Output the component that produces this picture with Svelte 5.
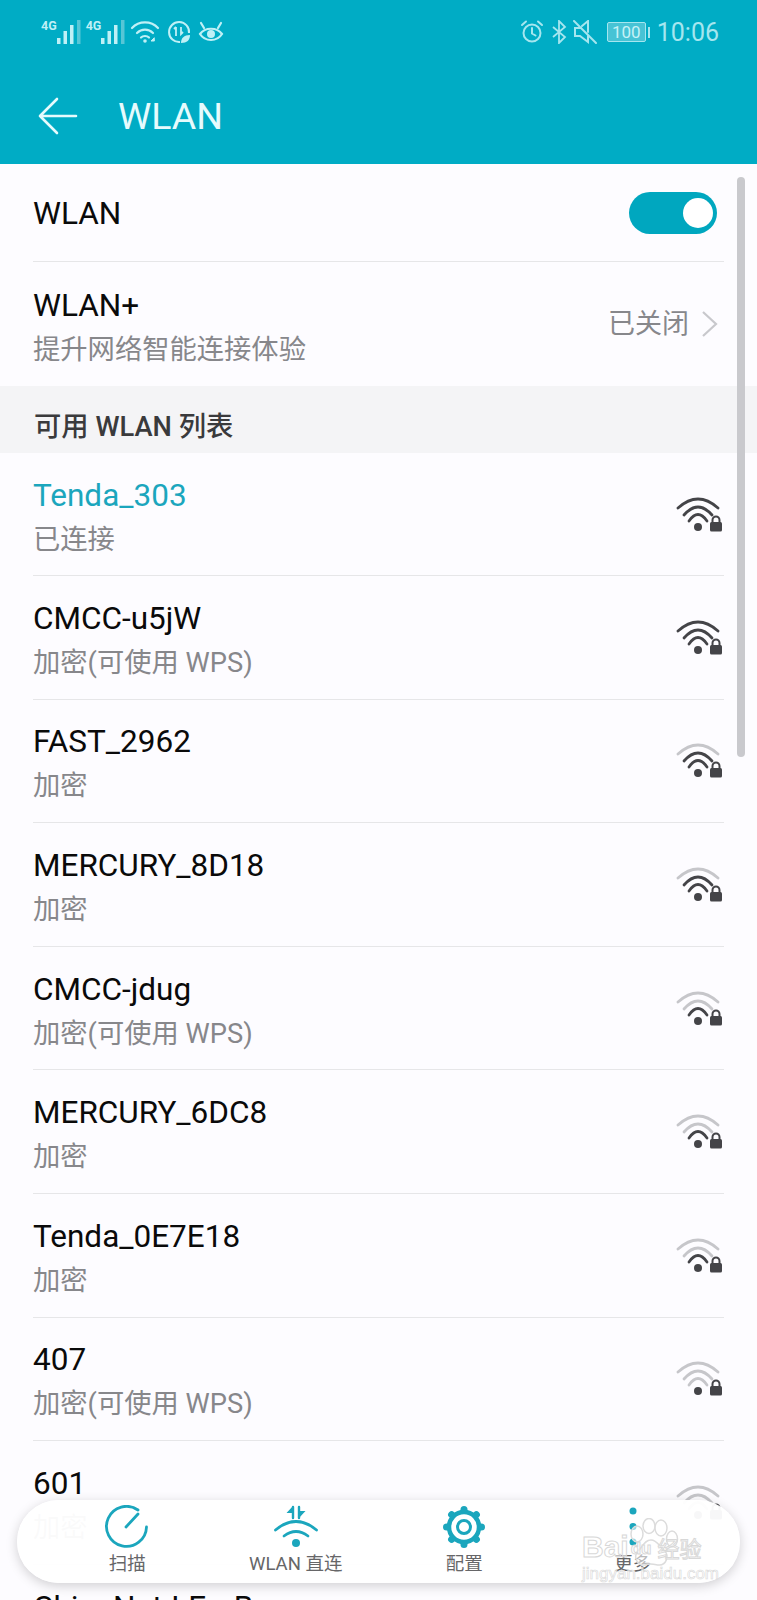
<script lang="ts">
	// level = how many arcs are dark, 3 is full signal
	const networks = [
		{ name: 'Tenda_303', sub: '已连接', level: 3, active: true },
		{ name: 'CMCC-u5jW', sub: '加密(可使用 WPS)', level: 3 },
		{ name: 'FAST_2962', sub: '加密', level: 2 },
		{ name: 'MERCURY_8D18', sub: '加密', level: 2 },
		{ name: 'CMCC-jdug', sub: '加密(可使用 WPS)', level: 1 },
		{ name: 'MERCURY_6DC8', sub: '加密', level: 1 },
		{ name: 'Tenda_0E7E18', sub: '加密', level: 1 },
		{ name: '407', sub: '加密(可使用 WPS)', level: 0 },
		{ name: '601', sub: '加密', level: 0 },
		{ name: 'ChinaNet-LEmB', sub: '加密', level: 0 }
	];
	const dark = '#444448';
	const light = '#c6c6ca';
</script>

<main class="page">
	<header class="top">
		<div class="status">
			<div class="status-left">
				{#each [0, 1] as s}
					<div class="sim">
						<span class="g4">4G</span>
						<svg width="24" height="26" viewBox="0 0 24 26">
							<rect x="0" y="19" width="3.5" height="6" fill="#bff0f6" />
							<rect x="6.5" y="12" width="3.5" height="13" fill="#bff0f6" />
							<rect x="13" y="6" width="3.5" height="19" fill="#bff0f6" />
							<rect x="20" y="1" width="3.5" height="24" fill="#57c6d6" />
						</svg>
					</div>
				{/each}
				<svg width="30" height="26" viewBox="0 0 30 26" fill="none" stroke="#bff0f6" stroke-width="2.2" stroke-linecap="round">
					<path d="M2 9c7-7.5 19-7.5 26 0" />
					<path d="M7 14c4.5-4.5 11.5-4.5 16 0" />
					<path d="M11 18.5c2-2 6-2 8 0" />
					<circle cx="15" cy="22" r="1.8" fill="#bff0f6" stroke="none" />
					<path d="M24 19l-3 3h3z" fill="#bff0f6" stroke-width="1" />
				</svg>
				<svg width="24" height="24" viewBox="0 0 24 24" fill="none" stroke="#bff0f6" stroke-width="2">
					<path d="M13 22a10 10 0 1 1 9-9" />
					<path d="M9 7v9M7 9L9 7M14 7v7l2-2" stroke-width="1.8" />
					<path d="M14 23c0-5 3-8 9-8 0 5-3 8-9 8z" fill="#bff0f6" stroke="none" />
				</svg>
				<svg width="26" height="24" viewBox="0 0 26 24" fill="none" stroke="#bff0f6" stroke-width="2.2" stroke-linecap="round">
					<path d="M2 14c5-7 17-7 22 0-5 8-17 8-22 0z" />
					<circle cx="13" cy="14" r="4" fill="#bff0f6" stroke="none" />
					<path d="M3 3l3 5M23 3l-3 5" />
				</svg>
			</div>
			<div class="status-right">
				<svg width="24" height="24" viewBox="0 0 24 24" fill="none" stroke="#a5e6ef" stroke-width="2" stroke-linecap="round">
					<circle cx="12" cy="13" r="8.5" />
					<path d="M12 8v5.5l3.5 2M2 5l4-3.5M22 5l-4-3.5" />
				</svg>
				<svg class="bt" width="16" height="24" viewBox="0 0 16 24" fill="none" stroke="#a5e6ef" stroke-width="1.8">
					<path d="M2 7l12 10-6 6V1l6 6L2 17" />
				</svg>
				<svg width="24" height="24" viewBox="0 0 24 24" fill="none" stroke="#a5e6ef" stroke-width="2" stroke-linecap="round">
					<path d="M8 8H2v8h5l8 6v-6M9 6l6-5v11" />
					<path d="M1 1l22 22" />
				</svg>
				<div class="battery">
					<span class="cell">100</span>
					<span class="nub"></span>
				</div>
				<span class="clock">10:06</span>
			</div>
		</div>
		<div class="title-bar">
			<svg class="back" width="40" height="40" viewBox="0 0 40 40" fill="none" stroke="#e6fbfd" stroke-width="2.6" stroke-linecap="round" stroke-linejoin="round">
				<path d="M2 20h36M19 3L2 20l17 17" />
			</svg>
			<h1>WLAN</h1>
		</div>
	</header>

	<section class="settings">
		<div class="row-plain">
			<span class="name">WLAN</span>
			<span class="toggle"><span class="knob"></span></span>
		</div>
		<div class="row-plus">
			<div class="text">
				<div class="name">WLAN+</div>
				<div class="sub">提升网络智能连接体验</div>
			</div>
			<div class="closed">
				<span>已关闭</span>
				<svg width="18" height="28" viewBox="0 0 18 28" fill="none" stroke="#c8c8cc" stroke-width="2.2">
					<path d="M3 2l13 12L3 26" />
				</svg>
			</div>
		</div>
	</section>

	<div class="section-head">可用 WLAN 列表</div>

	<section class="list">
		{#each networks as n}
			<div class="net">
				<div class="text">
					<div class="name" class:active={n.active}>{n.name}</div>
					<div class="sub">{n.sub}</div>
				</div>
				<svg class="wifi" width="46" height="35" viewBox="0 0 46 35" fill="none" stroke-width="2.8" stroke-linecap="round">
					<path d="M2 11Q22 -7 42 11" stroke={n.level >= 3 ? dark : light} />
					<path d="M8 18Q22 2 36 18" stroke={n.level >= 2 ? dark : light} />
					<path d="M13 24Q22 11 31 24" stroke={n.level >= 1 ? dark : light} />
					<circle cx="22" cy="30" r="4" fill={dark} />
					<path d="M36.5 26v-3a3.5 3.5 0 0 1 7 0v3" stroke={dark} stroke-width="2" />
					<rect x="34" y="25" width="12" height="9.5" rx="1.5" fill={dark} />
				</svg>
			</div>
		{/each}
	</section>

	<div class="scrollbar"></div>

	<nav class="bottom">
		<div class="tab">
			<svg width="44" height="44" viewBox="0 0 44 44" fill="none" stroke="#1ba6bd" stroke-width="2.8" stroke-linecap="round">
				<path d="M33 5A20 20 0 1 0 41.5 22" />
				<path d="M21 22L33 9" />
			</svg>
			<span>扫描</span>
		</div>
		<div class="tab">
			<svg width="44" height="44" viewBox="0 0 44 44" fill="none" stroke="#1ba6bd" stroke-width="2.8" stroke-linecap="round">
				<path d="M1.5 25Q22 8 42.5 25" />
				<path d="M10 31Q22 22 34 31" />
				<circle cx="22" cy="38" r="4" fill="#1ba6bd" stroke="none" />
				<path d="M19 2V13M25 2V13" stroke-width="2.4" />
				<path d="M19 1L12.5 8H19zM25 13L31.5 6H25z" fill="#1ba6bd" stroke="none" />
			</svg>
			<span>WLAN 直连</span>
		</div>
		<div class="tab">
			<svg width="44" height="44" viewBox="0 0 44 44" fill="none" stroke="#1ba6bd">
				<circle cx="22" cy="22" r="15" stroke-width="4.5" />
				<circle cx="22" cy="22" r="6.5" stroke-width="3" />
				{#each [0, 45, 90, 135, 180, 225, 270, 315] as a}
					<circle cx="22" cy="4.5" r="3.5" fill="#1ba6bd" stroke="none" transform="rotate({a} 22 22)" />
				{/each}
			</svg>
			<span>配置</span>
		</div>
		<div class="tab">
			<svg width="44" height="44" viewBox="0 0 44 44" fill="#1ba6bd">
				<circle cx="22" cy="6" r="3.5" />
				<circle cx="22" cy="21.5" r="3.5" />
				<circle cx="22" cy="37" r="3.5" />
			</svg>
			<span>更多</span>
		</div>
		<div class="watermark">
			<svg class="paw" width="56" height="56" viewBox="0 0 56 56" fill="rgba(255,255,255,0.55)" stroke="#dcdcdc" stroke-width="1.5">
				<ellipse cx="8" cy="16" rx="6" ry="8" />
				<ellipse cx="20" cy="8" rx="6" ry="7.5" />
				<ellipse cx="32" cy="10" rx="6" ry="8" />
				<ellipse cx="43" cy="21" rx="5.5" ry="8" />
				<path d="M22 22c6 0 8 6 13 10 6 6 2 16-6 15-5-1-8-2-13 0-8 1-12-8-7-14 5-4 6-11 13-11z" />
			</svg>
			<div class="wm-top"><span class="bai">Bai</span><span class="du">du</span><span class="jy">经验</span></div>
			<div class="wm-url">jingyan.baidu.com</div>
		</div>
	</nav>
</main>

<style>
	:global(body) {
		margin: 0;
		background: #fdfcff;
	}
	.page {
		position: relative;
		width: 757px;
		height: 1600px;
		overflow: hidden;
		background: #fdfcff;
		font-family: Roboto, 'Noto Sans CJK SC', sans-serif;
	}
	.top {
		height: 164px;
		background: #00acc5;
		box-sizing: border-box;
		padding: 18px 38px 0 41px;
	}
	.status {
		display: flex;
		justify-content: space-between;
		align-items: center;
		height: 28px;
	}
	.status-left,
	.status-right {
		display: flex;
		align-items: center;
		gap: 7px;
	}
	.sim {
		display: flex;
		align-items: flex-end;
		height: 26px;
		margin-right: -2px;
	}
	.g4 {
		font-size: 12.5px;
		font-weight: 700;
		color: #bff0f6;
		align-self: flex-start;
		line-height: 14px;
	}
	.bt {
		margin-right: -1px;
	}
	.battery {
		display: flex;
		align-items: center;
		gap: 2px;
		margin-left: 3px;
	}
	.cell {
		box-sizing: border-box;
		width: 39px;
		height: 20px;
		border: 1px solid #a5e6ef;
		border-radius: 2px;
		background: rgba(255, 255, 255, 0.28);
		color: #c8f2f7;
		font-size: 17px;
		line-height: 18px;
		text-align: center;
	}
	.nub {
		width: 2px;
		height: 11px;
		background: #a5e6ef;
	}
	.clock {
		font-size: 25px;
		color: #a5e6ef;
	}
	.title-bar {
		display: flex;
		align-items: center;
		margin-top: 48px;
		gap: 40px;
		margin-left: -3px;
	}
	h1 {
		margin: 0;
		font-size: 37.5px;
		font-weight: 400;
		color: #e6fbfd;
		line-height: 44px;
	}
	.settings {
		padding-left: 33px;
	}
	.row-plain {
		box-sizing: border-box;
		height: 98px;
		margin-right: 33px;
		display: flex;
		align-items: center;
		justify-content: space-between;
		border-bottom: 1px solid #e6e6e8;
		padding: 0 7px 0 0;
	}
	.row-plain .name {
		padding-top: 3px;
	}
	.row-plus {
		height: 124px;
		margin-right: 33px;
		display: flex;
		align-items: center;
		justify-content: space-between;
	}
	.text {
		padding-top: 7px;
	}
	.name {
		font-size: 31.5px;
		line-height: 44px;
		color: #0a0a0a;
	}
	.name.active {
		color: #1ba6bd;
	}
	.sub {
		font-size: 27.3px;
		line-height: 44px;
		color: #87878b;
	}
	.toggle {
		box-sizing: border-box;
		width: 88px;
		height: 42px;
		border-radius: 21px;
		background: #00a7bf;
		display: flex;
		justify-content: flex-end;
		align-items: center;
		padding-right: 4px;
	}
	.knob {
		width: 30px;
		height: 30px;
		border-radius: 50%;
		background: #fff;
	}
	.closed {
		display: flex;
		align-items: center;
		gap: 11px;
		padding-right: 6px;
		font-size: 27px;
		line-height: 34px;
		color: #87878b;
	}
	.section-head {
		height: 67px;
		box-sizing: border-box;
		padding: 22px 0 0 34px;
		background: #f4f4f6;
		font-size: 27.3px;
		font-weight: 500;
		line-height: 38px;
		color: #3a3a3c;
	}
	.list {
		padding-left: 33px;
	}
	.net {
		box-sizing: border-box;
		height: 123.6px;
		margin-right: 33px;
		display: flex;
		align-items: center;
		justify-content: space-between;
		border-bottom: 1px solid #e6e6e8;
	}
	.net:first-child {
		height: 123px;
	}
	.wifi {
		margin-right: 2px;
	}
	.scrollbar {
		position: absolute;
		top: 177px;
		right: 12px;
		width: 8px;
		height: 580px;
		border-radius: 4px;
		background: #c9c9cd;
	}
	.bottom {
		position: absolute;
		left: 17px;
		top: 1500px;
		width: 723px;
		height: 83px;
		border-radius: 42px;
		background: rgba(255, 255, 255, 0.96);
		box-shadow: 0 3px 12px rgba(0, 0, 0, 0.18);
		display: flex;
		box-sizing: border-box;
		padding-left: 26px;
	}
	.tab {
		width: 168.5px;
		display: flex;
		flex-direction: column;
		align-items: center;
		padding-top: 5px;
		font-size: 18.5px;
		line-height: 24px;
		color: #666668;
	}
	.tab span {
		margin-top: 3px;
	}
	.watermark {
		position: absolute;
		left: 565px;
		top: 33px;
		width: 140px;
		font-family: 'Liberation Sans', 'Noto Sans CJK SC', sans-serif;
		color: rgba(255, 255, 255, 0.6);
		-webkit-text-stroke: 1px #d8d8d8;
	}
	.paw {
		position: absolute;
		left: 47px;
		top: -15px;
	}
	.wm-top {
		position: relative;
		display: flex;
		align-items: center;
		height: 28px;
		font-size: 30px;
		font-weight: 700;
	}
	.du {
		font-size: 17px;
		margin: 4px 6px 0 2px;
	}
	.jy {
		font-size: 22px;
		font-weight: 400;
	}
	.wm-url {
		font-size: 17px;
		line-height: 20px;
		margin-top: 3px;
		white-space: nowrap;
		-webkit-text-stroke: 0.6px #d8d8d8;
	}
</style>
